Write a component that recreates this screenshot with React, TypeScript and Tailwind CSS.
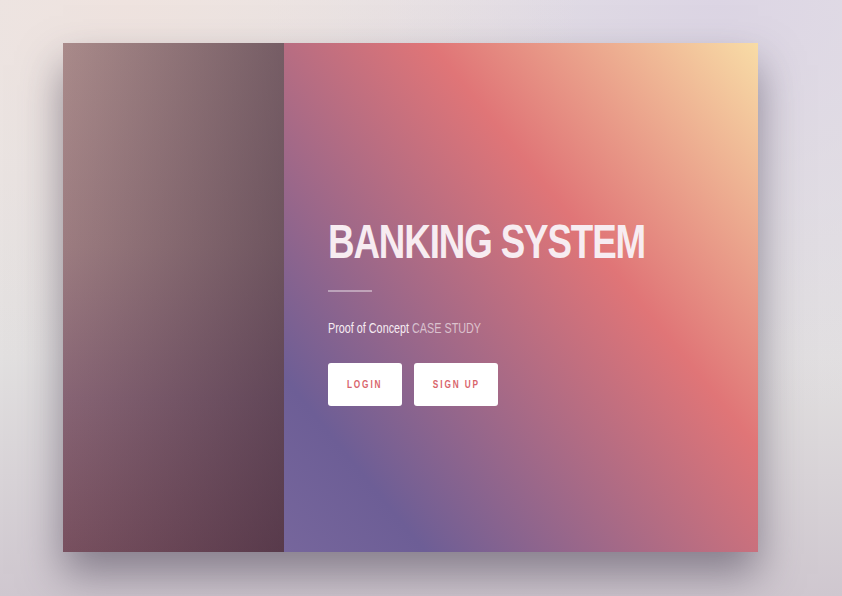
import React from "react";

const sans = { fontFamily: '"Liberation Sans", Arial, sans-serif' };

export default function App() {
  return (
    <div className="w-[842px] h-[596px] overflow-hidden bg-[radial-gradient(ellipse_at_15%_0%,#efe3df_0%,transparent_45%),radial-gradient(ellipse_at_85%_0%,#dcd5e4_0%,transparent_50%),linear-gradient(to_bottom,#e8e6e6,#e2e0e0_60%,#cfc7cf)] pt-[43px] pl-[63px]">
      <div className="flex w-[695px] h-[509px] shadow-[0_22px_40px_rgba(70,60,80,0.55)]">
        {/* blurred side panel */}
        <div className="w-[221px] h-full bg-[linear-gradient(to_right,rgba(40,25,45,0)_0%,rgba(40,25,45,0.4)_100%),linear-gradient(to_bottom,#a98a8a_0%,#9c7c80_40%,#876474_70%,#78505f_100%)]" />

        {/* hero */}
        <div
          className="flex-1 h-full flex flex-col items-start pl-[44px] pt-[174px] bg-[linear-gradient(51deg,#76669c_0%,#6d5e96_16%,#e07577_63%,#f8dca6_100%)]"
          style={sans}
        >
          <h1 className="text-[49px] leading-none font-bold tracking-[-1.5px] text-[#f7ecf1] whitespace-nowrap scale-x-[0.75] origin-left">
            BANKING SYSTEM
          </h1>
          <div className="mt-[24px] w-[44px] h-[2px] bg-white/40" />
          <p className="mt-[26px] text-[15px] leading-[20px] text-[#f6ecf2] whitespace-nowrap scale-x-[0.72] origin-left">
            Proof of Concept <span className="text-white/60">CASE STUDY</span>
          </p>
          <div className="mt-[25px] flex gap-[12px]">
            <button className="w-[74px] h-[43px] bg-white rounded-[3px] flex items-center justify-center">
              <span className="block text-[11px] font-bold tracking-[2.5px] text-[#d9656c] scale-x-[0.75] whitespace-nowrap">
                LOGIN
              </span>
            </button>
            <button className="w-[84px] h-[43px] bg-white rounded-[3px] flex items-center justify-center">
              <span className="block text-[11px] font-bold tracking-[2.5px] text-[#d9656c] scale-x-[0.75] whitespace-nowrap">
                SIGN UP
              </span>
            </button>
          </div>
        </div>
      </div>
    </div>
  );
}
